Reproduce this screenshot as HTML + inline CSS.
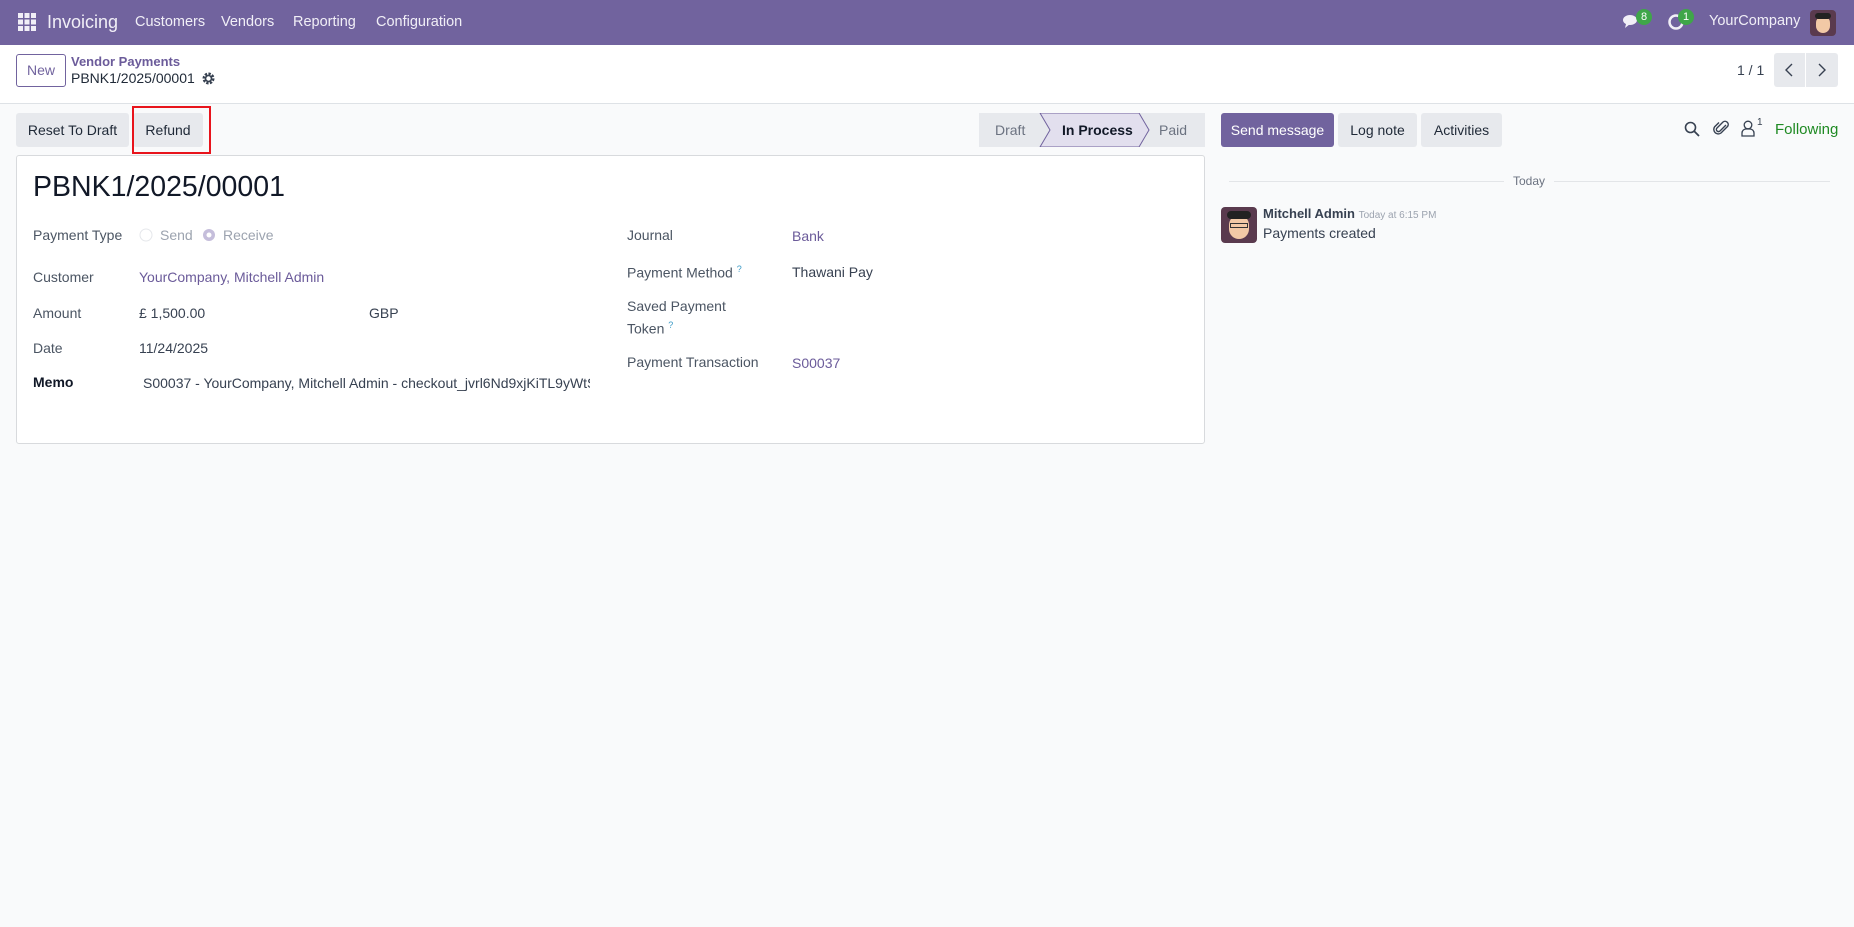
<!DOCTYPE html>
<html><head><meta charset="utf-8">
<style>
*{box-sizing:border-box;margin:0;padding:0}
body{width:1854px;height:927px;overflow:hidden;background:#f9fafb;font-family:"Liberation Sans",sans-serif;font-size:14px;color:#374151;position:relative}
.abs{position:absolute;white-space:nowrap}
.nav{position:absolute;left:0;top:0;width:1854px;height:45px;background:#71639e;color:#fff}
.nav .abs{color:#f1eff7;font-size:14.5px;top:14px}
.cp{position:absolute;left:0;top:45px;width:1854px;height:59px;background:#fff;border-bottom:1px solid #dee2e6}
.btn{position:absolute;background:#e7e9ed;border-radius:3px;color:#1f2937;font-size:14px;text-align:center}
.lbl{position:absolute;color:#4b5563;font-size:14px;white-space:nowrap}
.val{position:absolute;color:#374151;font-size:14px;white-space:nowrap}
.link{color:#6b5b9a}
.avatar{position:absolute;border-radius:4px;background:#5a3a4e;overflow:hidden}
</style></head><body>
<div class="nav">
  <svg class="abs" style="left:18px;top:13px" width="18" height="18" viewBox="0 0 18 18" fill="#f1eff7">
    <rect x="0" y="0" width="5" height="5"/><rect x="6.5" y="0" width="5" height="5"/><rect x="13" y="0" width="5" height="5"/>
    <rect x="0" y="6.5" width="5" height="5"/><rect x="6.5" y="6.5" width="5" height="5"/><rect x="13" y="6.5" width="5" height="5"/>
    <rect x="0" y="13" width="5" height="5"/><rect x="6.5" y="13" width="5" height="5"/><rect x="13" y="13" width="5" height="5"/>
  </svg>
  <div class="abs" style="left:47px;top:12px;font-size:18px">Invoicing</div>
  <div class="abs" style="left:135px">Customers</div>
  <div class="abs" style="left:221px">Vendors</div>
  <div class="abs" style="left:293px">Reporting</div>
  <div class="abs" style="left:376px">Configuration</div>
  <svg class="abs" style="left:1623px;top:13px" width="18" height="16" viewBox="0 0 18 16" fill="#f1eff7"><ellipse cx="7" cy="7" rx="7" ry="5"/><path d="M3 11 L2 15 L7 11Z"/></svg>
  <div class="abs" style="left:1636px;top:9px;width:16px;height:16px;border-radius:8px;background:#3fa649;font-size:11px;text-align:center;line-height:16px;color:#fff">8</div>
  <svg class="abs" style="left:1667px;top:13px" width="18" height="18" viewBox="0 0 18 18"><circle cx="9" cy="9" r="6.5" fill="none" stroke="#f1eff7" stroke-width="2.5"/></svg>
  <div class="abs" style="left:1678px;top:9px;width:16px;height:16px;border-radius:8px;background:#3fa649;font-size:11px;text-align:center;line-height:16px;color:#fff">1</div>
  <div class="abs" style="left:1709px;top:13px">YourCompany</div>
  <div class="avatar" style="left:1810px;top:10px;width:26px;height:26px"><div style="position:absolute;left:6px;top:6px;width:14px;height:17px;border-radius:7px;background:#f2c9a6"></div><div style="position:absolute;left:5px;top:3px;width:16px;height:6px;border-radius:3px;background:#222"></div></div>
</div>
<div class="cp">
  <div style="position:absolute;left:16px;top:9px;width:50px;height:33px;border:1px solid #71639e;border-radius:3px;color:#71639e;text-align:center;line-height:31px;font-size:14px">New</div>
  <div class="abs" style="left:71px;top:9px;color:#6b5b9a;font-size:13px;font-weight:bold">Vendor Payments</div>
  <div class="abs" style="left:71px;top:25px;color:#1f2937;font-size:14px">PBNK1/2025/00001</div>
  <svg class="abs" style="left:202px;top:27px" width="13" height="13" viewBox="0 0 13 13"><circle cx="6.5" cy="6.5" r="4.5" fill="none" stroke="#374151" stroke-width="3" stroke-dasharray="2.2 1.3"/><circle cx="6.5" cy="6.5" r="3" fill="none" stroke="#374151" stroke-width="1.6"/></svg>
  <div class="abs" style="left:1737px;top:17px;color:#374151">1 / 1</div>
  <div class="btn" style="left:1774px;top:8px;width:31px;height:34px;border-radius:3px 0 0 3px"><svg width="31" height="34" viewBox="0 0 31 34"><path d="M18 11 L12 17 L18 23" fill="none" stroke="#374151" stroke-width="1.4"/></svg></div>
  <div class="btn" style="left:1806px;top:8px;width:32px;height:34px;border-radius:0 3px 3px 0"><svg width="32" height="34" viewBox="0 0 32 34"><path d="M13 11 L19 17 L13 23" fill="none" stroke="#374151" stroke-width="1.4"/></svg></div>
</div>

<div class="btn" style="left:16px;top:113px;width:113px;height:34px;line-height:34px">Reset To Draft</div>
<div class="btn" style="left:133px;top:113px;width:70px;height:34px;line-height:34px">Refund</div>
<div style="position:absolute;left:132px;top:106px;width:79px;height:48px;border:2px solid #e8141c"></div>

<svg class="abs" style="left:979px;top:113px" width="226" height="34" viewBox="0 0 226 34">
  <rect x="0" y="0" width="226" height="34" fill="#e7e9ed"/>
  <path d="M61 0 L160 0 L170 17 L160 34 L61 34 L71 17 Z" fill="#e2dfee" stroke="#71639e" stroke-width="1"/>
  <text x="16" y="22" font-family="Liberation Sans" font-size="14" fill="#6b7280">Draft</text>
  <text x="83" y="22" font-family="Liberation Sans" font-size="14" fill="#111827" font-weight="bold">In Process</text>
  <text x="180" y="22" font-family="Liberation Sans" font-size="14" fill="#6b7280">Paid</text>
</svg>

<div style="position:absolute;left:16px;top:155px;width:1189px;height:289px;background:#fff;border:1px solid #d8dadd;border-radius:3px"></div>
<div class="abs" style="left:33px;top:171px;font-size:28.5px;color:#111827">PBNK1/2025/00001</div>

<div class="lbl" style="left:33px;top:227px">Payment Type</div>
<svg class="abs" style="left:139px;top:228px" width="14" height="14"><circle cx="7" cy="7" r="6" fill="#fff" stroke="#e5e7eb"/></svg>
<div class="val" style="left:160px;top:227px;color:#9ca3af">Send</div>
<svg class="abs" style="left:202px;top:228px" width="14" height="14"><circle cx="7" cy="7" r="6" fill="#c5bedb"/><circle cx="7" cy="7" r="2.5" fill="#fff"/></svg>
<div class="val" style="left:223px;top:227px;color:#9ca3af">Receive</div>

<div class="lbl" style="left:33px;top:269px">Customer</div>
<div class="val link" style="left:139px;top:269px">YourCompany, Mitchell Admin</div>
<div class="lbl" style="left:33px;top:305px">Amount</div>
<div class="val" style="left:139px;top:305px">£ 1,500.00</div>
<div class="val" style="left:369px;top:305px">GBP</div>
<div class="lbl" style="left:33px;top:340px">Date</div>
<div class="val" style="left:139px;top:340px">11/24/2025</div>
<div class="lbl" style="left:33px;top:374px;color:#111827;font-weight:bold">Memo</div>
<div class="val" style="left:143px;top:375px;width:447px;overflow:hidden">S00037 - YourCompany, Mitchell Admin - checkout_jvrl6Nd9xjKiTL9yWtS</div>

<div class="lbl" style="left:627px;top:227px">Journal</div>
<div class="val link" style="left:792px;top:228px">Bank</div>
<div class="lbl" style="left:627px;top:264px">Payment Method <sup style="color:#3b9ac6;font-size:9px">?</sup></div>
<div class="val" style="left:792px;top:264px">Thawani Pay</div>
<div class="lbl" style="left:627px;top:298px">Saved Payment</div>
<div class="lbl" style="left:627px;top:320px">Token <sup style="color:#3b9ac6;font-size:9px">?</sup></div>
<div class="lbl" style="left:627px;top:354px">Payment Transaction</div>
<div class="val link" style="left:792px;top:355px">S00037</div>

<div class="btn" style="left:1221px;top:113px;width:113px;height:34px;line-height:34px;background:#71639e;color:#fff">Send message</div>
<div class="btn" style="left:1338px;top:113px;width:79px;height:34px;line-height:34px">Log note</div>
<div class="btn" style="left:1421px;top:113px;width:81px;height:34px;line-height:34px">Activities</div>
<svg class="abs" style="left:1684px;top:121px" width="16" height="16" viewBox="0 0 16 16"><circle cx="6.5" cy="6.5" r="5" fill="none" stroke="#374151" stroke-width="1.6"/><path d="M10 10 L15 15" stroke="#374151" stroke-width="1.8"/></svg>
<svg class="abs" style="left:1713px;top:119px" width="18" height="18" viewBox="0 0 18 18"><path d="M13 6 L7 12 a2 2 0 0 1 -3 -3 L10 3 a3.2 3.2 0 0 1 4.5 4.5 L8 14 a4.5 4.5 0 0 1 -6.3 -6.3 L6 3.5" fill="none" stroke="#374151" stroke-width="1.4"/></svg>
<svg class="abs" style="left:1741px;top:120px" width="14" height="17" viewBox="0 0 14 17"><circle cx="7" cy="5" r="3.8" fill="none" stroke="#374151" stroke-width="1.3"/><path d="M1 16 V13 a4 4 0 0 1 4 -4 H9 a4 4 0 0 1 4 4 V16 Z" fill="none" stroke="#374151" stroke-width="1.3"/></svg>
<div class="abs" style="left:1757px;top:117px;font-size:10px;color:#374151">1</div>
<div class="abs" style="left:1775px;top:121px;color:#1f8a23;font-size:15px">Following</div>

<div style="position:absolute;left:1229px;top:181px;width:275px;height:1px;background:#e3e5e8"></div>
<div style="position:absolute;left:1554px;top:181px;width:276px;height:1px;background:#e3e5e8"></div>
<div class="abs" style="left:1513px;top:174px;font-size:12px;color:#6b7280">Today</div>
<div class="avatar" style="left:1221px;top:207px;width:36px;height:36px"><div style="position:absolute;left:8px;top:8px;width:20px;height:24px;border-radius:10px;background:#f2c9a6"></div><div style="position:absolute;left:6px;top:4px;width:24px;height:8px;border-radius:4px;background:#222"></div><div style="position:absolute;left:9px;top:16px;width:18px;height:5px;border:1.5px solid #333"></div></div>
<div class="abs" style="left:1263px;top:206px;font-size:13px;font-weight:bold;color:#374151">Mitchell Admin <span style="font-weight:normal;font-size:10px;color:#9ca3af">Today at 6:15 PM</span></div>
<div class="abs" style="left:1263px;top:225px;font-size:14px;color:#374151">Payments created</div>
</body></html>
